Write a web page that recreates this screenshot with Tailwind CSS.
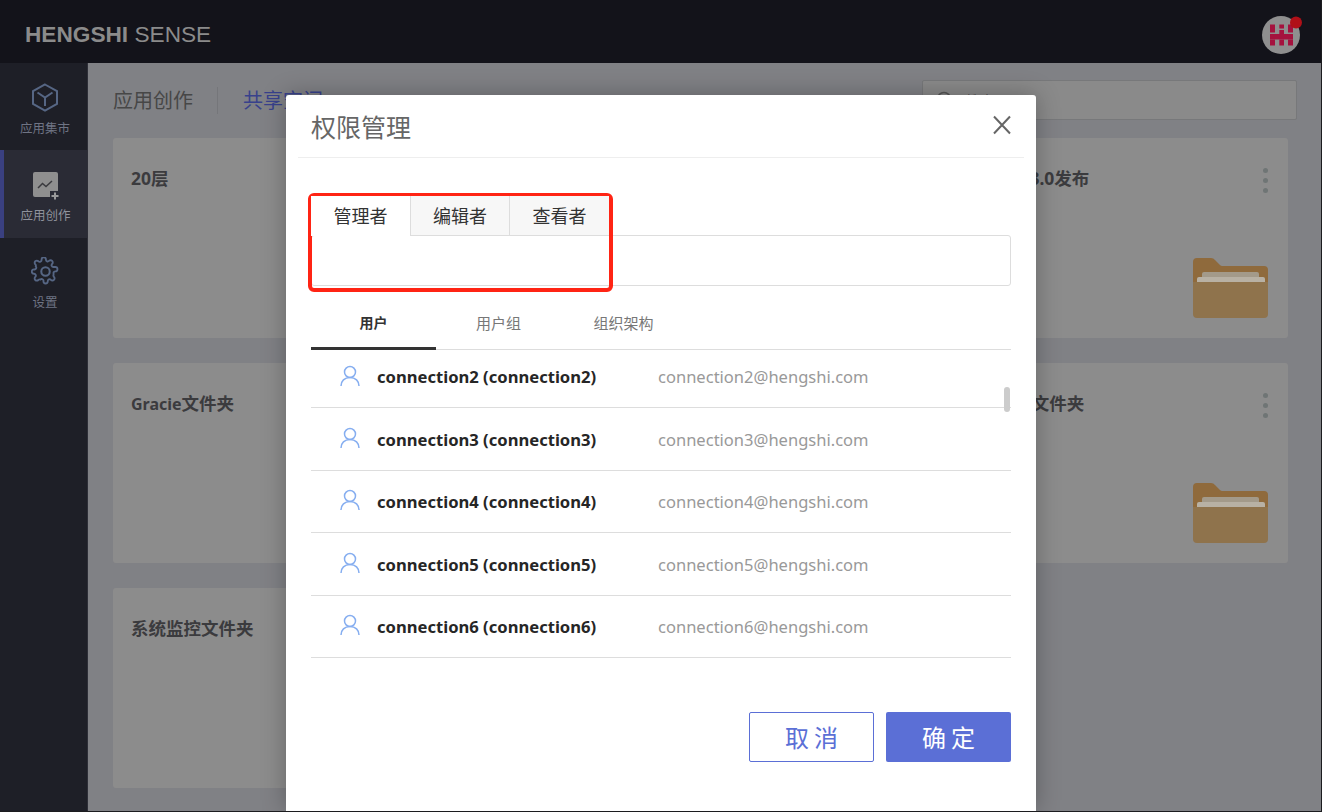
<!DOCTYPE html>
<html lang="zh">
<head>
<meta charset="utf-8">
<title>权限管理</title>
<script src="https://cdn.jsdelivr.net/npm/@tailwindcss/browser@4"></script>
</head>
<body class="m-0 overflow-hidden bg-[#808185]">
<div class="relative w-[1322px] h-[812px] overflow-hidden flex flex-col border-b border-r border-[#1c1c1f] font-['Noto_Sans','Noto_Sans_CJK_SC',sans-serif]">

  <!-- top bar -->
  <header class="h-[63px] shrink-0 bg-[#13131a] flex items-center justify-between pl-[25px] pr-[19px]">
    <div class="font-['Liberation_Sans',sans-serif] text-[22.650px] text-[#8b8b8b] leading-none mt-[6px]"><span class="font-bold">HENGSHI</span> SENSE</div>
    <svg class="w-[40px] h-[40px] mt-[4px]" viewBox="0 0 40 40">
      <circle cx="19" cy="21" r="19" fill="#8f8f8f"/>
      <g fill="#a5123e">
        <rect x="8" y="10.500" width="5" height="8"/>
        <rect x="17.300" y="10.500" width="4.700" height="4"/>
        <rect x="26" y="10.500" width="5" height="8"/>
        <rect x="17.300" y="16" width="4.700" height="4"/>
        <rect x="8" y="20" width="23" height="5.500"/>
        <rect x="8" y="25.500" width="5" height="6"/>
        <rect x="17.300" y="25.500" width="4.700" height="6"/>
        <rect x="26" y="25.500" width="5" height="6"/>
      </g>
      <circle cx="34" cy="8.500" r="6" fill="#b01018"/>
    </svg>
  </header>

  <div class="flex flex-1 min-h-0">
    <!-- sidebar -->
    <nav class="w-[88px] shrink-0 bg-[#1e1f27] border-r border-[#2e2f38] flex flex-col text-[12.500px] leading-4 text-[#6f7484]">
      <a class="h-[87px] flex flex-col items-center pt-[20px] pl-[3px] gap-[9px]">
        <svg class="w-[28px] h-[29px]" viewBox="0 0 28 29" fill="none" stroke="#566684" stroke-width="2"><path d="M14 1.500 26 8.200v12.600L14 27.500 2 20.800V8.200Z"/><path d="M6.500 9.500 14 14.500l7.500-5M14 14.500V23"/></svg>
        <span class="whitespace-nowrap">应用集市</span>
      </a>
      <a class="h-[88px] flex flex-col items-center pt-[22px] gap-[6px] bg-[#2a2b35] border-l-4 border-[#3a4080] text-[#8f929c]">
        <svg class="w-[28px] h-[30px]" viewBox="0 0 28 30" fill="none">
          <rect x="1" y="0" width="25" height="25" rx="2" fill="#8f8f8f"/>
          <path d="M6 16 10.500 11.500 14 14.500 20 9" stroke="#3a3a3e" stroke-width="1.500"/>
          <rect x="18" y="19" width="10" height="10" fill="#2a2b35"/>
          <path d="M23 20.500v7M19.500 24h7" stroke="#9a9a9a" stroke-width="2"/>
        </svg>
        <span class="whitespace-nowrap">应用创作</span>
      </a>
      <a class="flex flex-col items-center pt-[19px] pl-[3px] gap-[9px]">
        <svg class="w-[29px] h-[29px]" viewBox="0 0 24 24" fill="none" stroke="#566684" stroke-width="1.700" stroke-linejoin="round"><circle cx="12" cy="12" r="3.500"/><path d="M19.400 15a1.650 1.650 0 0 0 .33 1.820l.06.06a2 2 0 1 1-2.830 2.830l-.06-.06a1.650 1.650 0 0 0-2.800 1.170V21a2 2 0 1 1-4 0v-.09A1.650 1.650 0 0 0 7.300 19.400a1.650 1.650 0 0 0-1.820.33l-.06.06a2 2 0 1 1-2.830-2.830l.06-.06a1.650 1.650 0 0 0-1.170-2.800H1.400a2 2 0 1 1 0-4h.09A1.650 1.650 0 0 0 3 7.300a1.650 1.650 0 0 0-.33-1.820l-.06-.06a2 2 0 1 1 2.830-2.830l.06.06a1.650 1.650 0 0 0 1.820.33H7.400a1.650 1.650 0 0 0 1-1.510V1a2 2 0 1 1 4 0v.09a1.650 1.650 0 0 0 2.800 1.170l.06-.06a2 2 0 1 1 2.830 2.830l-.06.06a1.650 1.650 0 0 0 1.170 2.800H21a2 2 0 1 1 0 4h-.09a1.650 1.650 0 0 0-1.510 1Z" transform="translate(1.200 1.200) scale(.9)"/></svg>
        <span>设置</span>
      </a>
    </nav>

    <!-- main -->
    <main class="flex-1 min-w-0 bg-[#808185] pl-[25px] pr-[33px] flex flex-col">
      <div class="h-[75px] shrink-0 flex items-center relative">
        <span class="text-[20px] text-[#474747] leading-none">应用创作</span>
        <span class="w-px h-[27px] bg-[#75767a] ml-[24px] mr-[25px]"></span>
        <span class="text-[20px] text-[#38418c] leading-none">共享空间</span>
        <div class="ml-auto -mr-[9px] w-[375px] h-[40px] -mt-[1px] border border-[#77787a] rounded-[2px] bg-[#8a8a8a] flex items-center pl-[13px] gap-[12px] text-[14px] text-[#555]">
          <svg class="w-[18px] h-[18px]" viewBox="0 0 18 18" fill="none" stroke="#555" stroke-width="1.500"><circle cx="8" cy="8" r="6.500"/><path d="m13 13 4 4"/></svg>
          <span>搜索</span>
        </div>
      </div>
      <div class="grid grid-cols-3 gap-[25px] auto-rows-[200px] text-[17.500px] font-bold text-[#3b3b3e] leading-6">
        <div class="bg-[#8c8c8c] rounded-[3px] pl-[18px] pt-[28px]">20层</div>
        <div class="bg-[#8c8c8c] rounded-[3px] pl-[18px] pt-[28px]">数据分析</div>
        <div class="relative bg-[#8c8c8c] rounded-[3px] pl-[18px] pt-[28px]">
          <span class="whitespace-nowrap"><span class="tracking-[-0.4px]">HENGSHI 版</span>3.0发布</span>
          <div class="absolute top-[30px] right-[20px] flex flex-col gap-[5px]"><i class="block w-[5px] h-[5px] rounded-full bg-[#6f7575]"></i><i class="block w-[5px] h-[5px] rounded-full bg-[#6f7575]"></i><i class="block w-[5px] h-[5px] rounded-full bg-[#6f7575]"></i></div>
          <svg class="absolute right-[20px] bottom-[20px] w-[75px] h-[60px]" viewBox="0 0 75 60">
            <path d="M0 4a4 4 0 0 1 4-4h14a5 5 0 0 1 4 2l5 5a3 3 0 0 0 3 1h41a4 4 0 0 1 4 4v14H0Z" fill="#8f6a3c"/>
            <rect x="9" y="14" width="57" height="12" rx="2" fill="#a39a8a"/>
            <rect x="4" y="19" width="68" height="10" rx="2" fill="#b8b1a4"/>
            <path d="M0 24h75v32a4 4 0 0 1-4 4H4a4 4 0 0 1-4-4Z" fill="#8f734c"/>
          </svg>
        </div>
        <div class="bg-[#8c8c8c] rounded-[3px] pl-[18px] pt-[28px]"><span class="text-[16px]">Gracie</span>文件夹</div>
        <div class="bg-[#8c8c8c] rounded-[3px] pl-[18px] pt-[28px]">数据连接</div>
        <div class="relative bg-[#8c8c8c] rounded-[3px] pl-[18px] pt-[28px]">
          <span class="whitespace-nowrap"><span class="tracking-[-0.7px]">共享应用数据</span>文件夹</span>
          <div class="absolute top-[30px] right-[20px] flex flex-col gap-[5px]"><i class="block w-[5px] h-[5px] rounded-full bg-[#6f7575]"></i><i class="block w-[5px] h-[5px] rounded-full bg-[#6f7575]"></i><i class="block w-[5px] h-[5px] rounded-full bg-[#6f7575]"></i></div>
          <svg class="absolute right-[20px] bottom-[20px] w-[75px] h-[60px]" viewBox="0 0 75 60">
            <path d="M0 4a4 4 0 0 1 4-4h14a5 5 0 0 1 4 2l5 5a3 3 0 0 0 3 1h41a4 4 0 0 1 4 4v14H0Z" fill="#8f6a3c"/>
            <rect x="9" y="14" width="57" height="12" rx="2" fill="#a39a8a"/>
            <rect x="4" y="19" width="68" height="10" rx="2" fill="#b8b1a4"/>
            <path d="M0 24h75v32a4 4 0 0 1-4 4H4a4 4 0 0 1-4-4Z" fill="#8f734c"/>
          </svg>
        </div>
        <div class="bg-[#8c8c8c] rounded-[3px] pl-[18px] pt-[28px]">系统监控文件夹</div>
      </div>
    </main>
  </div>

  <!-- modal -->
  <section class="absolute left-[286px] top-[95px] w-[750px] h-[716px] bg-white rounded-t-[3px] shadow-[0_0_24px_rgba(0,0,0,0.28)] flex flex-col">
    <div class="mx-[12px] h-[63px] shrink-0 border-b border-[#eeeeee] flex items-center justify-between pl-[13px] pr-[12px]">
      <h2 class="text-[25px] font-normal text-[#666] leading-none mt-[2px]">权限管理</h2>
      <svg class="w-[20px] h-[20px] -mt-[2px]" viewBox="0 0 20 20" fill="none" stroke="#666" stroke-width="2"><path d="M2 1.500 18 18.500M18 1.500 2 18.500"/></svg>
    </div>
    <div class="px-[25px] flex flex-col flex-1 min-h-0">
      <div class="mt-[38px] flex h-[40px] relative z-10 text-[18px] text-[#333] leading-none">
        <div class="w-[100px] h-[40px] bg-white border-r border-[#dddddd] flex items-center justify-center">管理者</div>
        <div class="w-[99px] h-[40px] bg-[#f7f7f7] border-r border-b border-[#dddddd] flex items-center justify-center">编辑者</div>
        <div class="w-[99px] h-[40px] bg-[#f7f7f7] border-b border-[#dddddd] flex items-center justify-center">查看者</div>
      </div>
      <div class="-mt-px h-[51px] shrink-0 border border-[#dddddd] rounded-[3px]"></div>
      <div class="h-[64px] shrink-0 flex border-b border-[#dddddd] text-[15px] leading-none text-[#777]">
        <div class="w-[125px] h-[64px] pt-[12px] flex items-center justify-center font-bold text-[14px] text-[#333] border-b-[3px] border-[#333333]">用户</div>
        <div class="w-[125px] pt-[12px] flex items-center justify-center">用户组</div>
        <div class="w-[125px] pt-[12px] flex items-center justify-center">组织架构</div>
      </div>
      <div class="relative text-[16.550px] leading-6">
        <div class="h-[58px] pb-[4px] flex items-center border-b border-[#dddddd]">
          <svg class="ml-[29px] w-[20px] h-[22px] shrink-0 -mt-[1px]" viewBox="0 0 20 22" fill="none" stroke="#86aef0" stroke-width="1.500"><circle cx="10" cy="7" r="5.500"/><path d="M1 21c0-5 3.500-8.500 9-8.500s9 3.500 9 8.500"/></svg>
          <span class="ml-[17px] w-[281px] font-bold text-[16.600px] text-[#262626] whitespace-nowrap">connection2 (connection2)</span>
          <span class="text-[#999]">connection2@hengshi.com</span>
        </div>
        <div class="h-[62.500px] pt-[2px] flex items-center border-b border-[#dddddd]">
          <svg class="ml-[29px] w-[20px] h-[22px] shrink-0 -mt-[3px]" viewBox="0 0 20 22" fill="none" stroke="#86aef0" stroke-width="1.500"><circle cx="10" cy="7" r="5.500"/><path d="M1 21c0-5 3.500-8.500 9-8.500s9 3.500 9 8.500"/></svg>
          <span class="ml-[17px] w-[281px] font-bold text-[16.600px] text-[#262626] whitespace-nowrap">connection3 (connection3)</span>
          <span class="text-[#999]">connection3@hengshi.com</span>
        </div>
        <div class="h-[62.500px] pt-[1px] flex items-center border-b border-[#dddddd]">
          <svg class="ml-[29px] w-[20px] h-[22px] shrink-0 -mt-[3px]" viewBox="0 0 20 22" fill="none" stroke="#86aef0" stroke-width="1.500"><circle cx="10" cy="7" r="5.500"/><path d="M1 21c0-5 3.500-8.500 9-8.500s9 3.500 9 8.500"/></svg>
          <span class="ml-[17px] w-[281px] font-bold text-[16.600px] text-[#262626] whitespace-nowrap">connection4 (connection4)</span>
          <span class="text-[#999]">connection4@hengshi.com</span>
        </div>
        <div class="h-[62.500px] pt-[2px] flex items-center border-b border-[#dddddd]">
          <svg class="ml-[29px] w-[20px] h-[22px] shrink-0 -mt-[3px]" viewBox="0 0 20 22" fill="none" stroke="#86aef0" stroke-width="1.500"><circle cx="10" cy="7" r="5.500"/><path d="M1 21c0-5 3.500-8.500 9-8.500s9 3.500 9 8.500"/></svg>
          <span class="ml-[17px] w-[281px] font-bold text-[16.600px] text-[#262626] whitespace-nowrap">connection5 (connection5)</span>
          <span class="text-[#999]">connection5@hengshi.com</span>
        </div>
        <div class="h-[62.500px] pt-[1px] flex items-center border-b border-[#dddddd]">
          <svg class="ml-[29px] w-[20px] h-[22px] shrink-0 -mt-[3px]" viewBox="0 0 20 22" fill="none" stroke="#86aef0" stroke-width="1.500"><circle cx="10" cy="7" r="5.500"/><path d="M1 21c0-5 3.500-8.500 9-8.500s9 3.500 9 8.500"/></svg>
          <span class="ml-[17px] w-[281px] font-bold text-[16.600px] text-[#262626] whitespace-nowrap">connection6 (connection6)</span>
          <span class="text-[#999]">connection6@hengshi.com</span>
        </div>
        <div class="absolute right-[1px] top-[37px] w-[6px] h-[25px] rounded-[3px] bg-[#cccccc]"></div>
      </div>
      <div class="mt-[54px] flex justify-end gap-[12px] text-[24px] leading-none">
        <button class="w-[125px] h-[50px] pl-[5px] pt-[2px] border border-[#5b6fd6] rounded-[2px] bg-white text-[#5b6fd6] tracking-[5px]">取消</button>
        <button class="w-[125px] h-[50px] pl-[5px] pt-[2px] rounded-[2px] bg-[#5b6fd6] text-white tracking-[5px]">确定</button>
      </div>
    </div>
  </section>

  <!-- red annotation -->
  <div class="absolute left-[307.500px] top-[192.500px] w-[305px] h-[99px] border-4 border-[#ff2414] rounded-[6px] pointer-events-none"></div>
</div>
</body>
</html>
